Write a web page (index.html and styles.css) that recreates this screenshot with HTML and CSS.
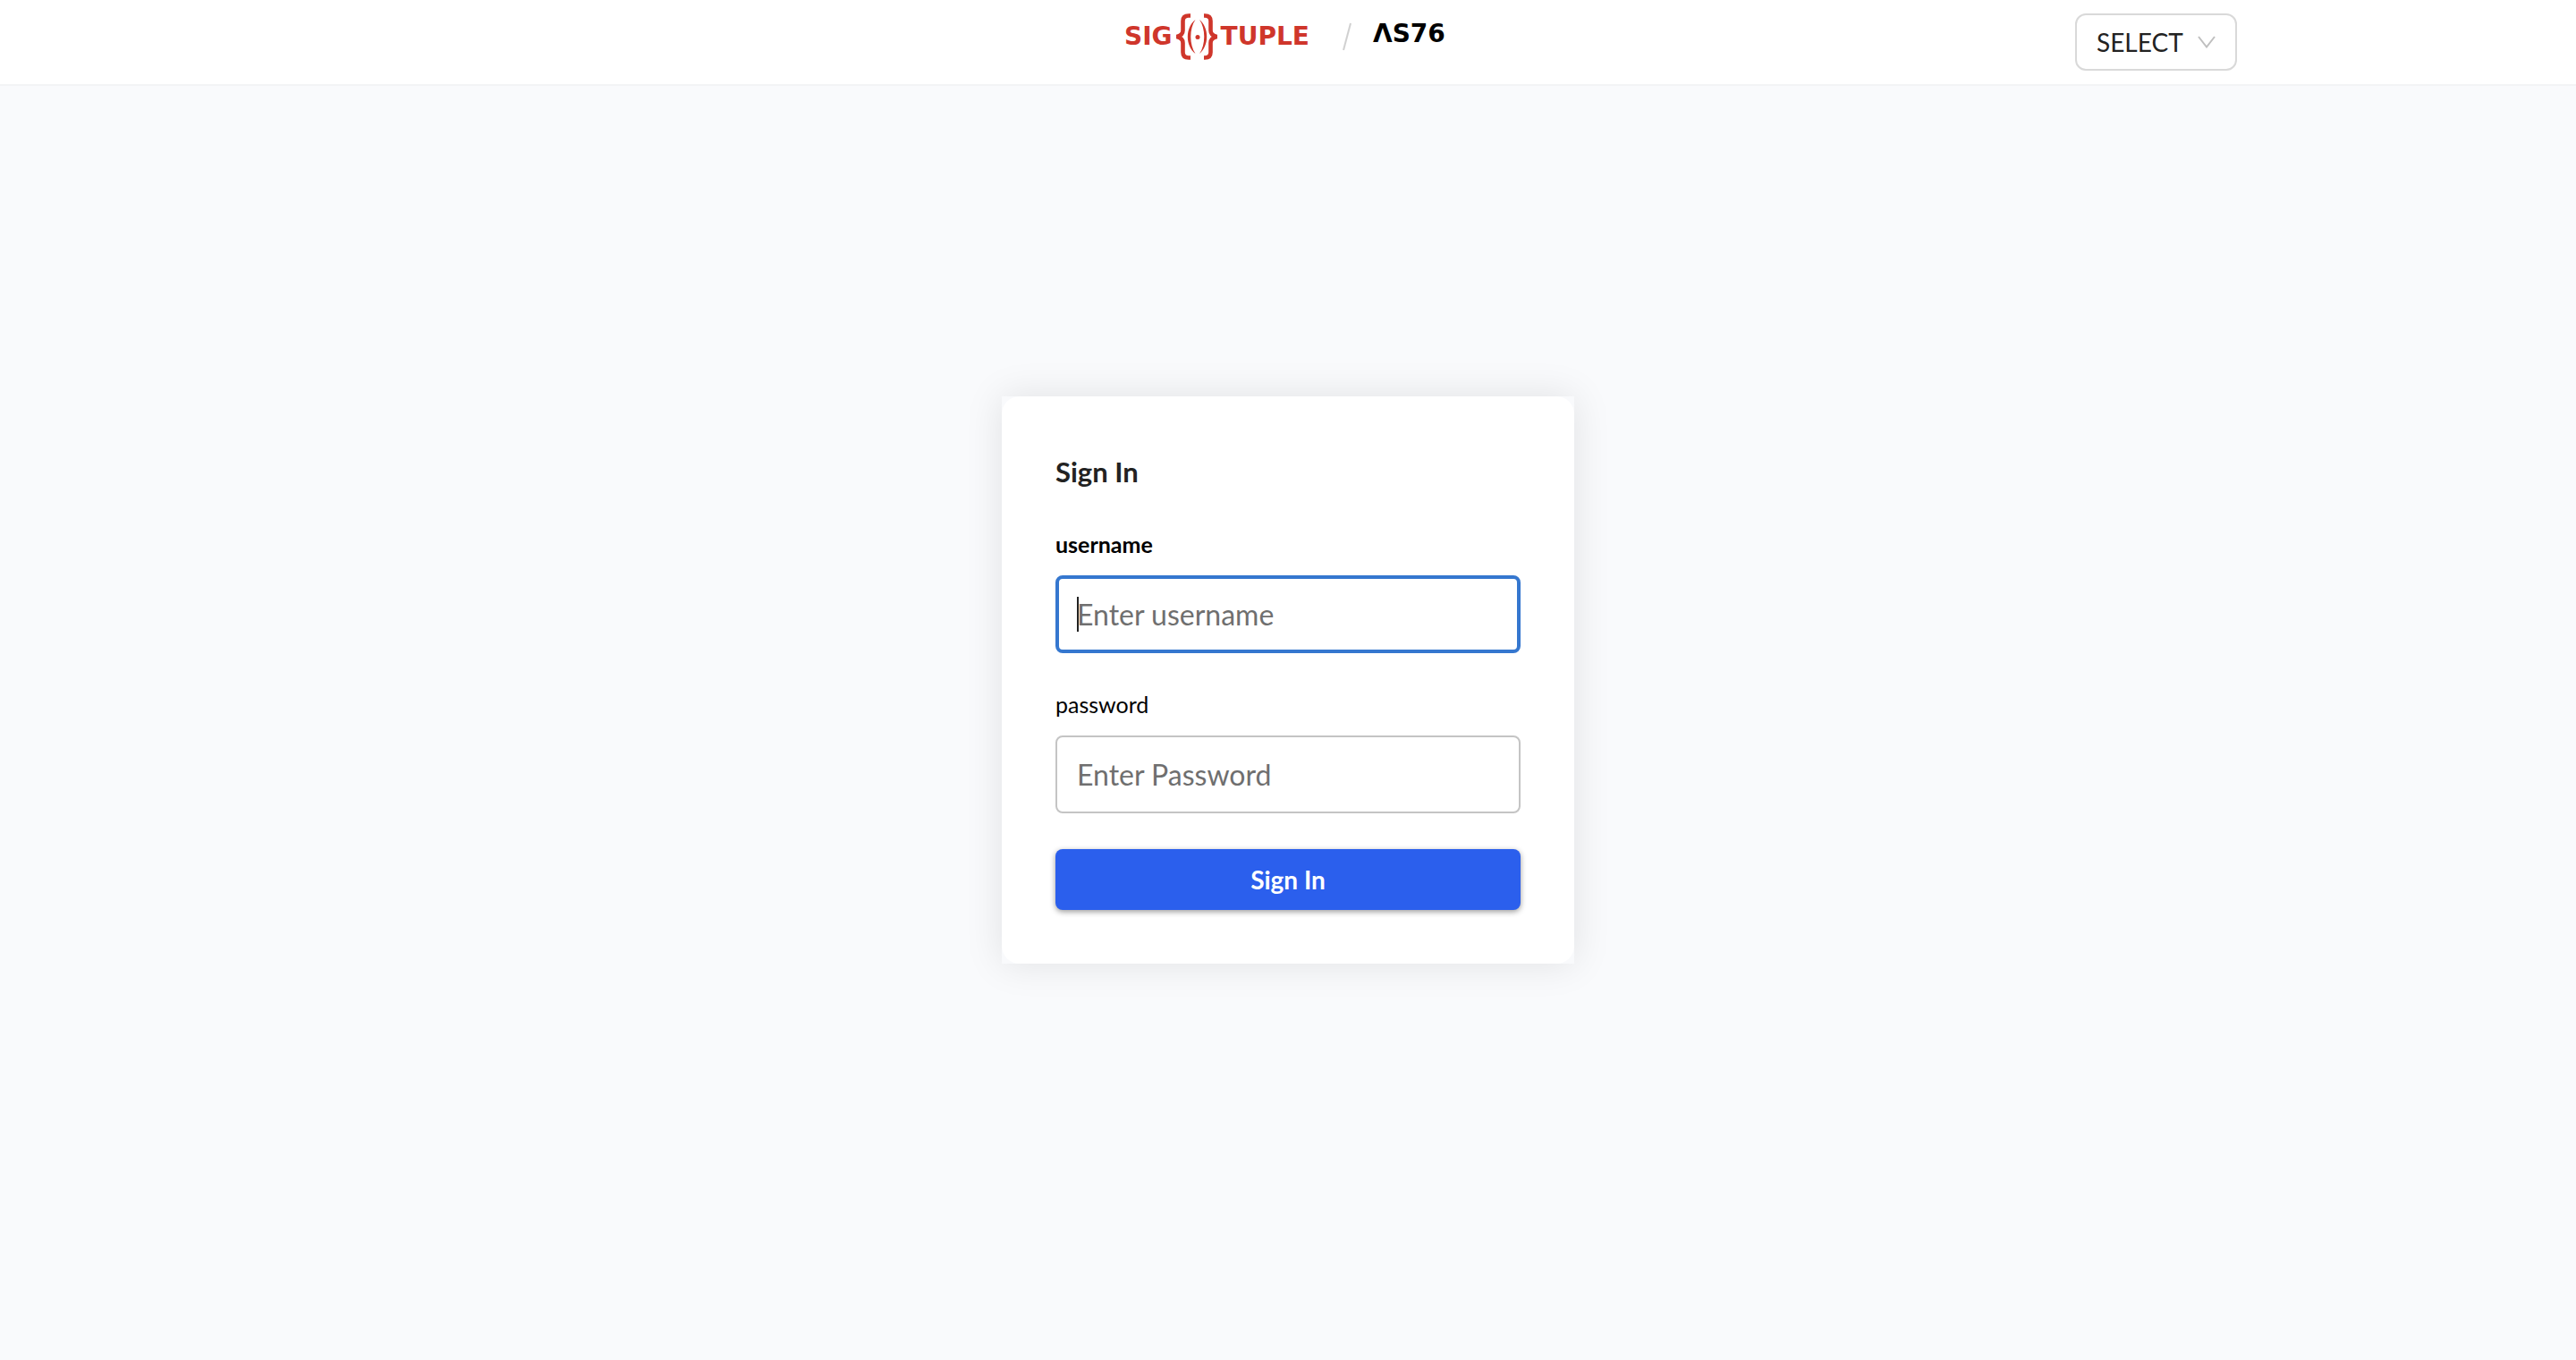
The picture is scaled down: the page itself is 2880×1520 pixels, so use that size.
FILE: index.html
```html
<!DOCTYPE html>
<html lang="en">
<head>
  <meta charset="utf-8">
  <meta name="viewport" content="width=device-width, initial-scale=1">
  <title>SigTuple AS76 - Sign In</title>
  <link rel="stylesheet" href="styles.css">
</head>
<body class="page">
  <header class="header">
    <div class="brand">
      <span class="brand-company">
        <span class="brand-word">SIG</span>
        <svg class="brand-mark" viewBox="0 0 46 52" aria-hidden="true">
          <g fill="none" stroke="#cf362b" stroke-width="4.600">
            <path d="M16 2.500h-2q-6.500 0-6.500 6v10.500q0 5.500-7 7 7 1.500 7 7v10.500q0 6 6.500 6h2"/>
            <path d="M31 2.500h1q6.500 0 6.500 6v10.500q0 5.500 7 7-7 1.500-7 7v10.500q0 6-6.500 6h-1"/>
          </g>
          <g fill="#cf362b">
            <path d="M21.500 7C10 16 10 36 21.500 45C14.500 35 14.500 17 21.500 7Z"/>
            <path d="M26 7C37 16 37 36 26 45C33 35 33 17 26 7Z"/>
            <circle cx="24" cy="26.500" r="2.500"/>
          </g>
        </svg>
        <span class="brand-word">TUPLE</span>
      </span>
      <svg class="brand-slash" viewBox="0 0 10 32" aria-hidden="true"><path d="M9 1L1 31" stroke="#d0d0d0" stroke-width="2"/></svg>
      <span class="brand-product">ΛS76</span>
    </div>
    <div class="picker">
      <select class="picker-select" aria-label="Select">
        <option>SELECT</option>
      </select>
      <svg class="picker-arrow" viewBox="0 0 20 14" aria-hidden="true"><path d="M1 1l9 11.500L19 1" fill="none" stroke="#bfbfbf" stroke-width="2"/></svg>
    </div>
  </header>
  <main class="main">
    <div class="card-frame">
      <form class="card">
        <h1 class="title">Sign In</h1>
        <div class="field">
          <label class="label label-active" for="username">username</label>
          <div class="control">
            <input class="input" id="username" type="text" placeholder="Enter username" autofocus>
            <span class="caret"></span>
          </div>
        </div>
        <div class="field">
          <label class="label" for="password">password</label>
          <div class="control">
            <input class="input" id="password" type="password" placeholder="Enter Password">
          </div>
        </div>
        <button class="submit" type="submit">Sign In</button>
      </form>
    </div>
  </main>
</body>
</html>
```
FILE: styles.css
```css
* {
  box-sizing: border-box;
}

.page {
  display: flex;
  flex-direction: column;
  min-height: 100vh;
  margin: 0;
  background: #f9fafc;
  color: #222;
  font-family: Lato, "Liberation Sans", sans-serif;
}

.header {
  display: grid;
  grid-template-columns: 1fr auto 1fr;
  height: 96px;
  padding: 15px 13.16%;
  border-bottom: 2px solid #f3f4f5;
  background: #fff;
}

.brand {
  display: grid;
  grid-template-columns: 220px 10px 88px;
  grid-column: 2;
  column-gap: 24px;
  align-items: start;
  height: 52px;
  font-family: "DejaVu Sans", sans-serif;
  font-size: 28px;
  font-weight: 700;
  line-height: 52px;
}

.brand-company {
  display: flex;
  gap: 4px;
  color: #cf362b;
}

.brand-mark {
  width: 46px;
  height: 52px;
}

.brand-slash {
  width: 10px;
  height: 32px;
  margin-top: 10px;
}

.brand-product {
  color: #000;
  line-height: 46px;
}

.picker {
  position: relative;
  justify-self: end;
  height: 64px;
}

.picker-select {
  width: 181px;
  height: 64px;
  padding: 0 22px;
  border: 2px solid #d9d9d9;
  border-radius: 12px;
  background: #fff;
  color: #222;
  font-family: inherit;
  font-size: 28px;
  appearance: none;
}

.picker-arrow {
  position: absolute;
  top: 25px;
  right: 24px;
  width: 20px;
  height: 14px;
  pointer-events: none;
}

.main {
  display: flex;
  flex: 1;
  align-items: center;
  justify-content: center;
  padding-bottom: 96px;
}

.card-frame {
  width: 640px;
  max-width: 100%;
  background: #f9fafc;
  box-shadow: 0 0 40px rgba(0, 0, 0, 0.1);
}

.card {
  display: flex;
  flex-direction: column;
  padding: 60px;
  border-radius: 20px;
  background: #fff;
}

.title {
  margin: 0 0 40px;
  font-size: 31px;
  font-weight: 700;
  line-height: 48px;
}

.field {
  display: flex;
  flex-direction: column;
  gap: 18px;
  margin-bottom: 40px;
}

.label {
  color: #000;
  font-size: 25px;
  line-height: 34px;
}

.label-active {
  font-weight: 700;
}

.control {
  display: flex;
  position: relative;
}

.input {
  width: 100%;
  height: 87px;
  padding: 0 22px;
  border: 2px solid #c4c4c4;
  border-radius: 8px;
  outline: 0;
  background: #fff;
  color: #222;
  caret-color: transparent;
  font-family: inherit;
  font-size: 32px;
}

.input::placeholder {
  color: #6f6f6f;
  opacity: 1;
}

.input:focus {
  padding: 0 20px;
  border: 4px solid #3577cf;
}

.caret {
  position: absolute;
  top: 24px;
  left: 24px;
  width: 2px;
  height: 39px;
  background: #222;
  pointer-events: none;
}

.submit {
  height: 68px;
  border: 0;
  border-radius: 8px;
  background: #2b5fed;
  box-shadow: 0 2px 6px rgba(0, 0, 0, 0.4);
  color: #fff;
  font-family: inherit;
  font-size: 28px;
  font-weight: 700;
}
```
